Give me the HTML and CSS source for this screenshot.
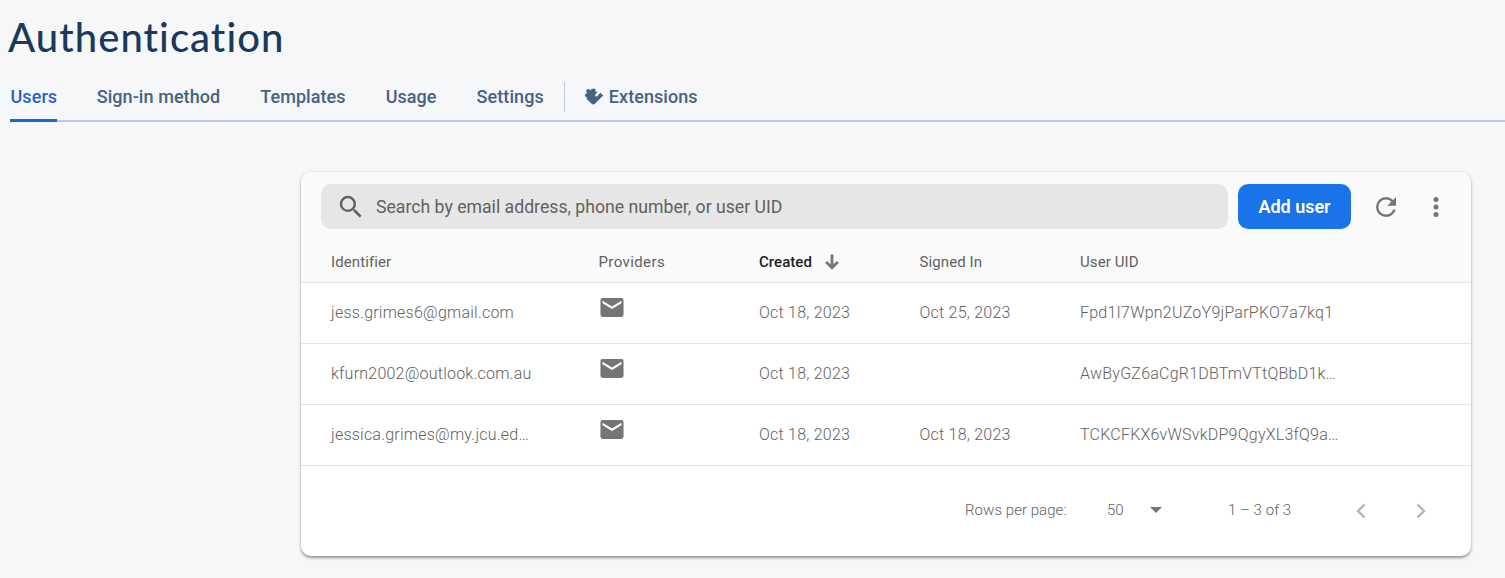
FILE: index.html
```html
<!DOCTYPE html>
<html lang="en"><head><meta charset="utf-8"><title>Authentication</title><link rel="stylesheet" href="styles.css"></head>
<body>
<h1 class="title"><span>Authentication</span></h1>
<nav class="tabs">
<a class="tab active">Users</a><a class="tab t2">Sign-in method</a><a class="tab t3">Templates</a><a class="tab t4">Usage</a><a class="tab t5">Settings</a>
<span class="divider"></span>
<a class="tab ext"><svg width="20" height="18" viewBox="0 0 20 18"><path fill="#476282" d="M2 2.500L4.300 .8 6.500 2.500C7.400 1 8.700 .3 10 .6c1.500.4 2.100 1.800 1.400 3.100l2.100.1-2.100 2.700c-.6 1.200.1 2.100 1.200 2.100.9 0 1.400-.8 1.600-1.900L16.700 5 19.200 7.500 10.900 15.700c-1 1-2.300 1-3.300 0L2.500 10.800 3 9.400C1.600 9.300.6 8.300.8 7.100 1 6 2 5.500 3.100 5.500z"/></svg>Extensions</a>
</nav>
<main class="card">
<div class="toolbar">
<div class="search"><svg width="30" height="30" viewBox="0 0 24 24"><path fill="#616161" d="M15.500 14h-.79l-.28-.27A6.471 6.471 0 0016 9.500 6.500 6.500 0 109.500 16c1.610 0 3.090-.59 4.230-1.570l.27.28v.79l5 4.990L20.490 19l-4.990-5zm-6 0C7.010 14 5 11.990 5 9.500S7.010 5 9.500 5 14 7.010 14 9.500 11.990 14 9.500 14z"/></svg><span>Search by email address, phone number, or user UID</span></div>
<button class="add">Add user</button>
<svg class="refresh" width="30" height="30" viewBox="0 0 24 24"><path fill="#757575" d="M17.650 6.350A7.958 7.958 0 0012 4a8 8 0 100 16c3.730 0 6.840-2.550 7.730-6h-2.080A5.990 5.990 0 0112 18c-3.310 0-6-2.690-6-6s2.690-6 6-6c1.660 0 3.140.69 4.220 1.780L13 11h7V4l-2.350 2.350z"/></svg>
<svg class="more" width="30" height="30" viewBox="0 0 24 24"><path fill="#757575" d="M12 8a2 2 0 100-4 2 2 0 000 4zm0 2a2 2 0 100 4 2 2 0 000-4zm0 6a2 2 0 100 4 2 2 0 000-4z"/></svg>
</div>
<div class="row head"><span>Identifier</span><span class="wide">Providers</span><span class="sorted">Created<svg width="16" height="18" viewBox="0 0 16 18"><path d="M8 1.500v13M2.200 9L8 14.800 13.800 9" fill="none" stroke="#757575" stroke-width="2.800"/></svg></span><span>Signed In</span><span>User UID</span></div>
<div class="row"><span>jess.grimes6@gmail.com</span><svg class="mail" viewBox="0 0 24 20"><path fill="#757575" fill-rule="evenodd" d="M3 1h18a2 2 0 012 2v14a2 2 0 01-2 2H3a2 2 0 01-2-2V3a2 2 0 012-2zm0 2.500V6l9 5.500L21 6V3.500L12 9z"/></svg><span>Oct 18, 2023</span><span>Oct 25, 2023</span><span class="uid">Fpd1I7Wpn2UZoY9jParPKO7a7kq1</span></div>
<div class="row"><span>kfurn2002@outlook.com.au</span><svg class="mail" viewBox="0 0 24 20"><path fill="#757575" fill-rule="evenodd" d="M3 1h18a2 2 0 012 2v14a2 2 0 01-2 2H3a2 2 0 01-2-2V3a2 2 0 012-2zm0 2.500V6l9 5.500L21 6V3.500L12 9z"/></svg><span>Oct 18, 2023</span><span></span><span class="uid">AwByGZ6aCgR1DBTmVTtQBbD1k…</span></div>
<div class="row"><span>jessica.grimes@my.jcu.ed…</span><svg class="mail" viewBox="0 0 24 20"><path fill="#757575" fill-rule="evenodd" d="M3 1h18a2 2 0 012 2v14a2 2 0 01-2 2H3a2 2 0 01-2-2V3a2 2 0 012-2zm0 2.500V6l9 5.500L21 6V3.500L12 9z"/></svg><span>Oct 18, 2023</span><span>Oct 18, 2023</span><span class="uid">TCKCFKX6vWSvkDP9QgyXL3fQ9a…</span></div>
<footer class="pager"><span class="rpp">Rows per page:</span><span class="size">50</span><svg class="caret" width="12" height="6" viewBox="0 0 12 6"><path fill="#757575" d="M0 0h12L6 6z"/></svg><span class="range">1 – 3 of 3</span>
<svg class="prev" width="10" height="16" viewBox="0 0 10 16"><path d="M8.500 1.500L2 8l6.500 6.500" fill="none" stroke="#b5b5b5" stroke-width="2.400"/></svg><svg class="next" width="10" height="16" viewBox="0 0 10 16"><path d="M1.500 1.500L8 8l-6.500 6.500" fill="none" stroke="#b5b5b5" stroke-width="2.400"/></svg></footer>
</main>
</body></html>
```
FILE: styles.css
```css
* { box-sizing: border-box; }
body { margin: 0; height: 578px; overflow: hidden; background: #f6f7f9; font-family: Roboto, sans-serif; }
.title { margin: 0; height: 72px; padding: 12px 0 0 8px; font: 500 40px/50px Lato, "Open Sans", sans-serif; letter-spacing: 1.050px; color: #1a3a5c; }
.tabs { height: 50px; display: flex; align-items: stretch; margin-left: 10px; border-bottom: 2px solid #bccbdc; }
.tab { height: 50px; line-height: 50px; font-size: 18px; font-weight: 500; letter-spacing: .07px; color: #476282; margin-right: 40px; white-space: nowrap; }
.active { width: 47px; margin-right: 39.700px; text-indent: .5px; color: #2962cc; background: linear-gradient(#1967d2, #1967d2) bottom / 100% 3px no-repeat; border-radius: 2px 2px 0 0; }
.t5 { margin-right: 20px; }
.divider { width: 1px; height: 30px; margin-top: 10px; background: #bccbdc; }
.ext { display: flex; align-items: center; gap: 5px; margin-left: 19px; }
.card { width: 1170px; height: 384px; margin: 50px 0 0 301px; background: #fff; border-radius: 10px; overflow: hidden; box-shadow: 0 1.500px 3px rgba(0,0,0,.4); }
.toolbar { height: 70px; background: #fafafa; display: flex; align-items: center; padding: 0 0 1px 20px; }
.search { width: 907px; height: 45px; border-radius: 10px; background: #e6e6e6; display: flex; align-items: center; gap: 10px; padding: 1px 0 0 15px; font-size: 17.670px; color: #616161; }
.add { width: 113px; height: 45px; margin-left: 10px; padding: 0; border: 0; border-radius: 10px; background: #1a73e8; color: #fff; font: 600 18px Roboto, sans-serif; }
.refresh { margin: 1px 0 0 20px; }
.more { margin: 1px 0 0 20px; }
.row { height: 61px; display: grid; grid-template-columns: 267.500px 160.500px 160.500px 160.500px 1fr; align-items: center; padding: 0 0 2px 30px; border-bottom: 1px solid #e0e2e6; font-size: 16px; letter-spacing: .23px; font-weight: 300; color: #616161; white-space: nowrap; }
.head { height: 41px; padding-bottom: 0; font-size: 15px; letter-spacing: .1px; font-weight: 400; color: #616161; background: #fafafa; }
.wide { letter-spacing: .4px; }
.sorted { display: flex; align-items: center; gap: 12px; font-weight: 500; letter-spacing: .05px; color: #212121; }
.mail { width: 26px; height: 21px; margin-top: -9px; }
.pager { height: 90px; display: flex; align-items: center; padding: 0 0 2px 664px; font-size: 15px; font-weight: 300; letter-spacing: .05px; color: #616161; }
.rpp { width: 142px; }
.size { width: 43px; }
.range { width: 127px; margin-left: 66px; }
.prev, .next { margin-top: 2px; margin-left: 1px; }
.next { margin-left: 50px; }
```
